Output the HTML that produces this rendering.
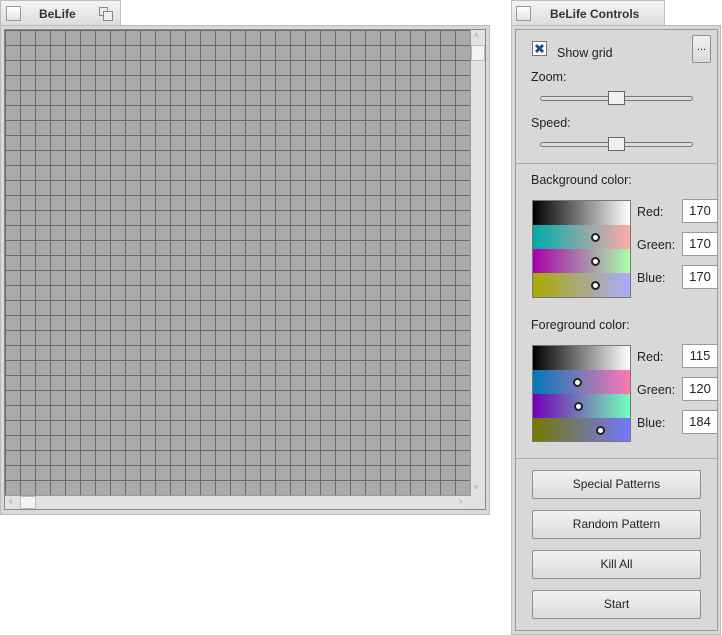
<html><head><style>
body{margin:0;width:722px;height:635px;background:#fff;position:relative;overflow:hidden;font-family:"Liberation Sans","DejaVu Sans",sans-serif;font-size:12px;color:#222}
.a{position:absolute;box-sizing:border-box}
.tab{background:linear-gradient(#f4f4f4,#dcdcdc);border:1px solid #bdbdbd;border-bottom:none}
.tt{font-weight:bold;font-size:12px;color:#333}
.btn{background:linear-gradient(#f2f2f2,#dadada);border:1px solid #8f8f8f;border-radius:2px;text-align:center;line-height:27px}
.inp{background:#fff;border:1px solid #999;text-align:center;line-height:22px;font-size:13px}
.lbl{font-size:12.5px}
.dot{width:9px;height:9px;border-radius:50%;background:#fff;border:2px solid #222;box-sizing:border-box}
</style></head><body>
<div class="a tab" style="left:0;top:0;width:121px;height:26px"></div>
<div class="a" style="left:6px;top:6px;width:15px;height:15px;border:1px solid #999;background:linear-gradient(#fff,#e4e4e4)"></div>
<div class="a tt" style="left:39px;top:7px">BeLife</div>
<div class="a" style="left:99px;top:7px;width:9px;height:9px;border:1px solid #888"></div>
<div class="a" style="left:103px;top:11px;width:10px;height:10px;border:1px solid #888;background:#eee"></div>
<div class="a" style="left:0;top:25px;width:490px;height:490px;background:#d8d8d8;border:1px solid #bbb"></div>
<div class="a" style="left:4px;top:29px;width:482px;height:481px;border:1px solid #888;background:#e0e0e0"></div>
<div class="a" style="left:5px;top:30px;width:466px;height:466px;background-color:#aaa;background-image:linear-gradient(90deg,#6a6a6a 1px,transparent 1px),linear-gradient(#6a6a6a 1px,transparent 1px);background-size:15px 15px"></div>
<div class="a" style="left:470px;top:30px;width:15px;height:466px;background:#e2e2e2;border-left:1px solid #999"></div>
<div class="a" style="left:471px;top:45px;width:14px;height:16px;background:#f4f4f4;border:1px solid #bbb"></div>
<div class="a" style="left:474px;top:31px;font-size:8px;color:#999">˄</div>
<div class="a" style="left:474px;top:483px;font-size:8px;color:#999">˅</div>
<div class="a" style="left:5px;top:495px;width:466px;height:14px;background:#e2e2e2;border-top:1px solid #999"></div>
<div class="a" style="left:20px;top:496px;width:16px;height:13px;background:#f4f4f4;border:1px solid #bbb"></div>
<div class="a" style="left:9px;top:496px;font-size:10px;color:#999">‹</div>
<div class="a" style="left:459px;top:496px;font-size:10px;color:#999">›</div>
<div class="a tab" style="left:511px;top:0;width:154px;height:26px"></div>
<div class="a" style="left:516px;top:6px;width:15px;height:15px;border:1px solid #999;background:linear-gradient(#fff,#e4e4e4)"></div>
<div class="a tt" style="left:550px;top:7px">BeLife Controls</div>
<div class="a" style="left:511px;top:25px;width:210px;height:610px;background:#d8d8d8;border:1px solid #bbb"></div>
<div class="a" style="left:515px;top:29px;width:203px;height:602px;border:1px solid #999"></div>
<div class="a" style="left:516px;top:163px;width:201px;height:1px;background:#aaa"></div>
<div class="a" style="left:516px;top:458px;width:201px;height:1px;background:#aaa"></div>
<div class="a" style="left:532px;top:41px;width:15px;height:15px;background:#fff;border:1px solid #777">
<svg width="13" height="13" style="position:absolute;left:0;top:0"><path d="M3 3L10 10M10 3L3 10" stroke="#1c4f96" stroke-width="3"/></svg></div>
<div class="a lbl" style="left:557px;top:46px">Show grid</div>
<div class="a btn" style="left:692px;top:35px;width:19px;height:28px;line-height:22px;font-size:11px">...</div>
<div class="a lbl" style="left:531px;top:70px">Zoom:</div>
<div class="a lbl" style="left:531px;top:116px">Speed:</div>
<div class="a" style="left:540px;top:96px;width:153px;height:5px;border:1px solid #777;border-radius:3px;background:#ddd"></div>
<div class="a" style="left:608px;top:91px;width:17px;height:14px;border:1px solid #666;background:#f0f0f0"></div>
<div class="a" style="left:540px;top:142px;width:153px;height:5px;border:1px solid #777;border-radius:3px;background:#ddd"></div>
<div class="a" style="left:608px;top:137px;width:17px;height:14px;border:1px solid #666;background:#f0f0f0"></div>
<div class="a lbl" style="left:531px;top:173px">Background color:</div>
<div class="a" style="left:532px;top:200px;width:99px;height:98px;border:1px solid #777">
<div style="height:24px;background:linear-gradient(90deg,#000,#fff)"></div>
<div style="height:24px;background:linear-gradient(90deg,#00aaaa,#ffaaaa)"></div>
<div style="height:24px;background:linear-gradient(90deg,#aa00aa,#aaffaa)"></div>
<div style="height:24px;background:linear-gradient(90deg,#aaaa00,#aaaaff)"></div>
</div>
<div class="a dot" style="left:591px;top:233px"></div>
<div class="a dot" style="left:591px;top:257px"></div>
<div class="a dot" style="left:591px;top:281px"></div>
<div class="a lbl" style="left:637px;top:205px">Red:</div>
<div class="a lbl" style="left:637px;top:238px">Green:</div>
<div class="a lbl" style="left:637px;top:271px">Blue:</div>
<div class="a inp" style="left:682px;top:199px;width:36px;height:24px">170</div>
<div class="a inp" style="left:682px;top:232px;width:36px;height:24px">170</div>
<div class="a inp" style="left:682px;top:265px;width:36px;height:24px">170</div>
<div class="a lbl" style="left:531px;top:318px">Foreground color:</div>
<div class="a" style="left:532px;top:345px;width:99px;height:97px;border:1px solid #777">
<div style="height:24px;background:linear-gradient(90deg,#000,#fff)"></div>
<div style="height:24px;background:linear-gradient(90deg,#0078b8,#ff78b8)"></div>
<div style="height:24px;background:linear-gradient(90deg,#7300b8,#73ffb8)"></div>
<div style="height:23px;background:linear-gradient(90deg,#737800,#7378ff)"></div>
</div>
<div class="a dot" style="left:573px;top:378px"></div>
<div class="a dot" style="left:574px;top:402px"></div>
<div class="a dot" style="left:596px;top:426px"></div>
<div class="a lbl" style="left:637px;top:350px">Red:</div>
<div class="a lbl" style="left:637px;top:383px">Green:</div>
<div class="a lbl" style="left:637px;top:416px">Blue:</div>
<div class="a inp" style="left:682px;top:344px;width:36px;height:24px">115</div>
<div class="a inp" style="left:682px;top:377px;width:36px;height:24px">120</div>
<div class="a inp" style="left:682px;top:410px;width:36px;height:24px">184</div>
<div class="a btn" style="left:532px;top:470px;width:169px;height:29px">Special Patterns</div>
<div class="a btn" style="left:532px;top:510px;width:169px;height:29px">Random Pattern</div>
<div class="a btn" style="left:532px;top:550px;width:169px;height:29px">Kill All</div>
<div class="a btn" style="left:532px;top:590px;width:169px;height:29px">Start</div>
</body></html>
